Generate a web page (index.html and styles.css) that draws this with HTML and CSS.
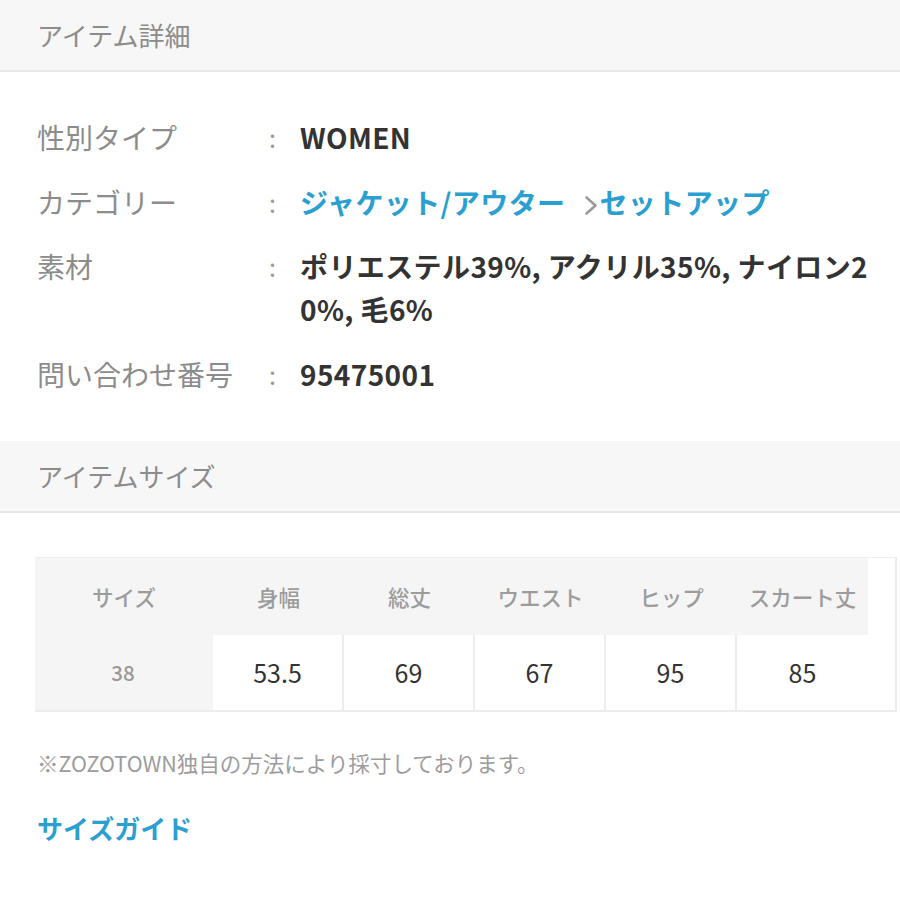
FILE: index.html
```html
<!DOCTYPE html>
<html lang="ja">
<head>
<meta charset="utf-8">
<link rel="stylesheet" href="styles.css">
</head>
<body>
<section class="sec-head"><h2>アイテム詳細</h2></section>
<dl class="details">
  <div class="row"><dt>性別タイプ</dt><dd class="colon">:</dd><dd class="val">WOMEN</dd></div>
  <div class="row"><dt>カテゴリー</dt><dd class="colon">:</dd><dd class="val"><a class="link">ジャケット/アウター</a><svg class="chev" width="14" height="22" viewBox="0 0 14 22"><path d="M2.5 3.5 L11.5 11.5 L2.5 19.5" fill="none" stroke="#9a9a9a" stroke-width="2.6" stroke-linecap="round" stroke-linejoin="round"/></svg><a class="link">セットアップ</a></dd></div>
  <div class="row"><dt>素材</dt><dd class="colon">:</dd><dd class="val">ポリエステル39%, アクリル35%, ナイロン20%, 毛6%</dd></div>
  <div class="row"><dt>問い合わせ番号</dt><dd class="colon">:</dd><dd class="val">95475001</dd></div>
</dl>
<section class="sec-head"><h2>アイテムサイズ</h2></section>
<div class="size-wrap">
  <div class="size-box">
    <table class="size">
      <thead>
        <tr><th>サイズ</th><th>身幅</th><th>総丈</th><th>ウエスト</th><th>ヒップ</th><th>スカート丈</th></tr>
      </thead>
      <tbody>
        <tr><th>38</th><td>53.5</td><td>69</td><td>67</td><td>95</td><td>85</td></tr>
      </tbody>
    </table>
  </div>
</div>
<p class="note">※ZOZOTOWN独自の方法により採寸しております。</p>
<p class="guide"><a class="link">サイズガイド</a></p>
</body>
</html>
```

FILE: styles.css
```css
* { box-sizing: border-box; }
html, body { margin: 0; padding: 0; background: #fff; }
body {
  font-family: "Noto Sans CJK JP", "Noto Sans", sans-serif;
  color: #333;
  width: 900px;
}
.sec-head {
  background: #f7f7f7;
  border-bottom: 2px solid #e8e8e8;
  height: 72px;
  display: flex;
  align-items: center;
  padding: 0 37px;
}
.sec-head h2 {
  margin: 0;
  font-size: 26px;
  font-weight: 400;
  color: #8c8c8c;
  line-height: 1;
}
.details {
  margin: 0;
  padding: 44px 30px 45px 37px;
  display: flex;
  flex-direction: column;
  gap: 21.5px;
}
.row {
  display: grid;
  grid-template-columns: 232px 31px 1fr;
  line-height: 43px;
  font-size: 28px;
}
.row dt { color: #8c8c8c; font-weight: 400; white-space: nowrap; }
.row dd { margin: 0; }
.colon { color: #9a9a9a; font-size: 25px; }
.val { font-weight: 700; color: #333; word-break: break-all; letter-spacing: 0.4px; }
.link { color: #2a9fd0; text-decoration: none; font-weight: 700; }
.chev { margin: 0 1px 0 19px; vertical-align: -2px; }
.size-wrap {
  padding: 44px 3px 0 35px;
}
.size-box {
  border-top: 1px solid #efefef;
  border-right: 2px solid #ececec;
  border-bottom: 2px solid #ececec;
  background: #fff;
}
.size {
  border-collapse: separate;
  border-spacing: 0;
}
.size thead th {
  background: #f5f5f5;
  height: 77px;
  width: 131px;
  font-size: 21.5px;
  font-weight: 500;
  color: #9c9c9c;
  text-align: center;
  padding: 0;
}
.size thead th:first-child { width: 178px; }
.size tbody th {
  background: #f5f5f5;
  font-size: 20.5px;
  font-weight: 500;
  color: #999;
  height: 75px;
  border-right: 2px solid #f5f5f5;
}
.size tbody td {
  text-align: center;
  font-size: 25px;
  color: #333;
  border-right: 2px solid #ededed;
  padding: 0;
}
.size tbody td:last-child { border-right: none; }
.note {
  margin: 37px 0 0 37px;
  font-size: 21.5px;
  color: #9c9c9c;
  line-height: 28px;
}
.guide {
  margin: 34px 0 0 37px;
  font-size: 26px;
  line-height: 34px;
}
```
